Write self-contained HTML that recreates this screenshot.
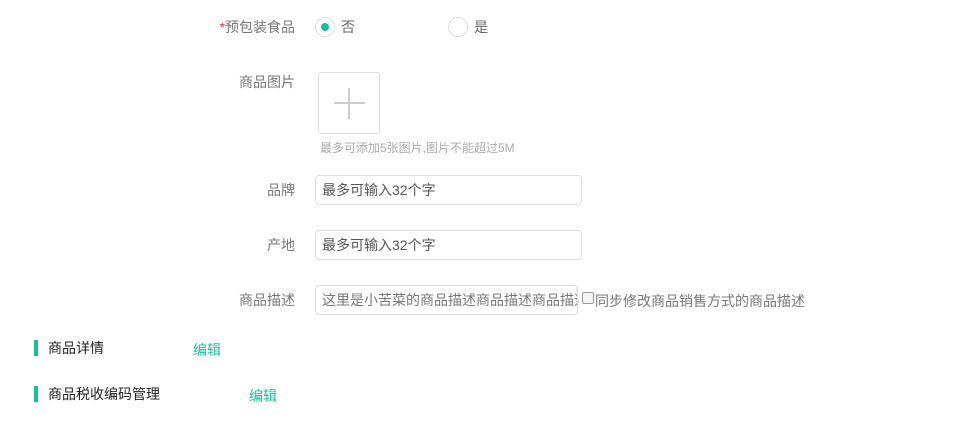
<!DOCTYPE html>
<html><head><meta charset="utf-8"><style>
body{margin:0;width:978px;height:421px;background:#fff;font-family:"Liberation Sans","Noto Sans CJK SC",sans-serif;font-size:14px;color:#666;position:relative;overflow:hidden}
.a{position:absolute;white-space:nowrap;line-height:16px}
.lbl{color:#777;text-align:right;width:100px}
.inp{position:absolute;left:315px;height:30px;border:1px solid #ddd;border-radius:4px;box-sizing:border-box;padding-left:6px;line-height:28px;color:#555;font-size:14px;overflow:hidden;white-space:nowrap}
.radio{position:absolute;width:20px;height:20px;border:1px solid #ddd;border-radius:50%;box-sizing:border-box}
.bar{position:absolute;left:34px;width:4px;height:16px;background:#1abc9c}
.ed{color:#1abc9c;font-size:14px}
</style></head><body>
<div class="a lbl" style="left:195px;top:19px"><span style="color:#e4393c">*</span>预包装食品</div>
<div class="radio" style="left:315px;top:17px"><div style="position:absolute;left:5px;top:5px;width:8px;height:8px;border-radius:50%;background:#1abc9c"></div></div>
<div class="a" style="left:341px;top:19px">否</div>
<div class="radio" style="left:448px;top:17px"></div>
<div class="a" style="left:474px;top:19px">是</div>
<div class="a lbl" style="left:195px;top:74px">商品图片</div>
<div style="position:absolute;left:318px;top:72px;width:62px;height:62px;border:1px solid #ddd;border-radius:3px;box-sizing:border-box">
<div style="position:absolute;left:15px;top:29px;width:31px;height:2px;background:#ccc"></div>
<div style="position:absolute;left:29px;top:15px;width:2px;height:31px;background:#ccc"></div></div>
<div class="a" style="left:320px;top:140px;font-size:12px;color:#aaa">最多可添加5张图片,图片不能超过5M</div>
<div class="a lbl" style="left:195px;top:182px">品牌</div>
<div class="inp" style="top:175px;width:267px">最多可输入32个字</div>
<div class="a lbl" style="left:195px;top:237px">产地</div>
<div class="inp" style="top:230px;width:267px">最多可输入32个字</div>
<div class="a lbl" style="left:195px;top:292px">商品描述</div>
<div class="inp" style="top:285px;width:263px;color:#777">这里是小苦菜的商品描述商品描述商品描述</div>
<div style="position:absolute;left:582px;top:292px;width:12px;height:12px;border:1px solid #999;border-radius:2px;box-sizing:border-box;background:#f3f3f3"></div>
<div class="a" style="left:595px;top:293px;color:#777">同步修改商品销售方式的商品描述</div>
<div class="bar" style="top:340px"></div>
<div class="a" style="left:48px;top:340px;color:#222">商品详情</div>
<div class="a ed" style="left:193px;top:342px">编辑</div>
<div class="bar" style="top:386px"></div>
<div class="a" style="left:48px;top:386px;color:#222">商品税收编码管理</div>
<div class="a ed" style="left:249px;top:388px">编辑</div>
</body></html>
